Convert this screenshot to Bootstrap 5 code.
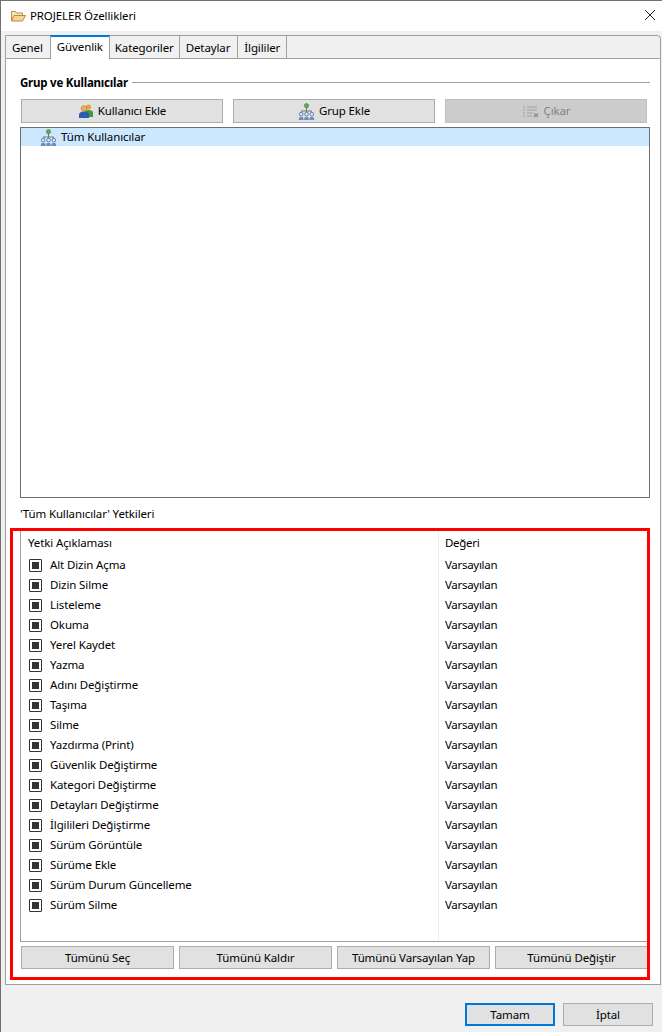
<!DOCTYPE html>
<html lang="tr">
<head>
    <meta charset="UTF-8">
    <meta name="viewport" content="width=device-width, initial-scale=1.0">
    <title>PROJELER Özellikleri</title>
    <link href="https://cdn.jsdelivr.net/npm/bootstrap@5.3.0/dist/css/bootstrap.min.css" rel="stylesheet">
    <style>
        html, body { height: 100%; }
        body { background: #f0f0f0; font-family: "Noto Sans", "Open Sans", sans-serif; font-size: 11.5px; letter-spacing: -.12px; line-height: 16px; color: #000; overflow: hidden; }
        .dlg { position: relative; height: 1032px; border-top: 1px solid #707070; border-left: 1px solid #707070; }
        .dlg-title { height: 30px; padding-left: 9px; gap: 4px; background: #fff; }
        .dlg-close { margin-left: auto; margin-right: 4px; margin-bottom: 2px; width: 16px; height: 16px; }
        .folder { margin: 0 1px 0 0; height: 100%; padding: 4px 0 0 4px; }
        .tabstrip { height: 24px; border: 1px solid #a0a0a0; border-radius: 0 4px 0 0; background: #f0f0f0; }
        .tabitem { padding: 0 6px; line-height: 23px; border-right: 1px solid #a0a0a0; color: #000; text-decoration: none; }
        .tabitem:first-child, .tabitem:nth-child(4) { padding: 0 7px 0 6px; }
        .tabitem:nth-child(3) { padding: 0 5px; }
        .tabitem.on { background: #fff; border-top: 2px solid #0078d7; line-height: 20px; height: 24px; margin-top: -1px; margin-bottom: -1px; border-left: 1px solid #a0a0a0; margin-left: -1px; }
        .tabpane { height: 926px; background: #fff; border: 1px solid #a0a0a0; border-top: 0; padding: 0 10px 0 14px; }
        .grp-head { padding-top: 8px; height: 40px; gap: 4px; font-weight: 700; letter-spacing: -.22px; }
        .grp-head hr { flex: 1; margin: 0 0 1px; border-top: 1px solid #a0a0a0; opacity: 1; }
        .swtbtn { height: 24px; border: 1px solid #adadad; border-radius: 0; background: #e1e1e1; color: #000; font-size: 11.5px; letter-spacing: -.12px; line-height: 16px; padding: 0; gap: 4px; }
        .swtbtn:disabled { background: #ccc; border-color: #bfbfbf; color: #838383; opacity: 1; }
        .btn-row { gap: 10px; padding: 0 3px 0 1px; }
        .btn-row .swtbtn { flex: 1 1 0; }
        .treebox { height: 371px; margin-top: 4px; border: 1px solid #6e6e6e; }
        .treesel { height: 18px; background: #cce8ff; padding-left: 19px; gap: 4px; }
        .perm-label { margin-top: 8px; height: 16px; }
        .permbox { margin-top: 7px; height: 413px; border-left: 1px solid #a0a0a0; border-bottom: 1px solid #a0a0a0; background: linear-gradient(#e8f0f8, #e8f0f8) no-repeat 417px 0 / 1px 100%; }
        .permhead { height: 26px; padding-top: 6px; }
        .colname { width: 417px; padding-left: 7px; }
        .colval { padding-left: 7px; flex: 1; letter-spacing: -.3px; }
        .permrow { height: 20px; line-height: 20px; }
        .permrow .colname { padding-left: 8px; gap: 8px; }
        .chk { width: 13px; height: 13px; border: 1.5px solid #333; border-radius: 1px; padding: 2px; }
        .chk::before { content: ""; display: block; width: 100%; height: 100%; background: #333; }
        .bulk { gap: 5px; margin-top: 4px; padding: 0 2px 0 1px; }
        .bulk .swtbtn { flex: 1 1 0; height: 23px; }
        .dlg-foot { gap: 8px; padding: 18px 8px 0 0; }
        .dlg-foot .swtbtn { width: 90px; height: 23px; }
        .dlg-foot .swtbtn.def { border: 2px solid #0078d7; }
        .redmark { position: absolute; left: 9px; top: 527px; width: 640px; height: 452px; border: 3px solid #f00; pointer-events: none; }
    </style>
</head>
<body>
<div class="dlg">
    <div class="dlg-title d-flex align-items-center">
        <svg width="16" height="16" viewBox="0 0 16 16">
            <path d="M1.500 13V3.500h4l1 1.500h6v2" fill="#f6e4bd" stroke="#b98a45"/>
            <path d="M1.500 13l2.500-5.500h11.500l-3 5.500z" fill="#f8d492" stroke="#b98a45" stroke-linejoin="round"/>
        </svg>
        <span>PROJELER Özellikleri</span>
        <svg class="dlg-close" viewBox="0 0 16 16"><path d="M3 3l10 10M13 3L3 13" stroke="#222" stroke-width="1" fill="none"/></svg>
    </div>
    <div class="folder">
        <div class="tabstrip d-flex">
            <a class="tabitem" href="#">Genel</a>
            <a class="tabitem on" href="#">Güvenlik</a>
            <a class="tabitem" href="#">Kategoriler</a>
            <a class="tabitem" href="#">Detaylar</a>
            <a class="tabitem" href="#">İlgililer</a>
        </div>
        <div class="tabpane">
            <div class="grp-head d-flex align-items-center"><span>Grup ve Kullanıcılar</span><hr></div>
            <div class="btn-row d-flex">
                <button class="btn swtbtn d-flex align-items-center justify-content-center" type="button">
                    <svg width="16" height="16" viewBox="0 0 16 16">
                        <circle cx="10.500" cy="4" r="2.600" fill="#e8a33a"/>
                        <path d="M7 14V9q0-2 3.500-2t4.500 2v5z" fill="#3f9a3f"/>
                        <circle cx="6" cy="5.500" r="2.800" fill="#f0b050" stroke="#a86a20" stroke-width=".5"/>
                        <path d="M1 15v-3q0-3.500 5-3.500t5 3.500v3z" fill="#2a5db0"/>
                    </svg>
                    <span>Kullanıcı Ekle</span>
                </button>
                <button class="btn swtbtn d-flex align-items-center justify-content-center" type="button">
                    <svg width="17" height="17" viewBox="0 0 16 16">
                        <use href="#grpicon"/>
                    </svg>
                    <span>Grup Ekle</span>
                </button>
                <button class="btn swtbtn d-flex align-items-center justify-content-center" type="button" disabled>
                    <svg width="18" height="16" viewBox="0 0 18 16">
                        <path d="M1 4h2M1 7h2M1 10h2M1 13h2M5 4h10M5 7h10M5 10h6M5 13h5" stroke="#aeaeae" stroke-width="1.500" fill="none"/>
                        <path d="M12 10.500l4 3.500M16 10.500l-4 3.500" stroke="#8f8f8f" stroke-width="1.500" fill="none"/>
                    </svg>
                    <span>Çıkar</span>
                </button>
            </div>
            <div class="treebox">
                <div class="treesel d-flex align-items-center">
                    <svg width="17" height="17" viewBox="0 0 16 16">
                        <g id="grpicon">
                            <path d="M8 4v4M3.500 10V7.500h9V10M8 7.500V10" stroke="#777" fill="none"/>
                            <circle cx="8" cy="2.500" r="2" fill="#5fae5f" stroke="#3a7d3a" stroke-width=".6"/>
                            <circle cx="3" cy="10.500" r="1.700" fill="#e6eef8" stroke="#4a6c9c" stroke-width=".8"/>
                            <circle cx="8" cy="10.500" r="1.700" fill="#e6eef8" stroke="#4a6c9c" stroke-width=".8"/>
                            <circle cx="13" cy="10.500" r="1.700" fill="#e6eef8" stroke="#4a6c9c" stroke-width=".8"/>
                            <path d="M.8 16v-1.500q0-1.500 2.200-1.500t2.200 1.500V16zM5.800 16v-1.500q0-1.500 2.200-1.500t2.200 1.500V16zM10.800 16v-1.500q0-1.500 2.200-1.500t2.200 1.500V16z" fill="#6a8fbe"/>
                        </g>
                    </svg>
                    <span>Tüm Kullanıcılar</span>
                </div>
            </div>
            <div class="perm-label">'Tüm Kullanıcılar' Yetkileri</div>
            <div class="permbox">
                <div class="permhead d-flex"><div class="colname">Yetki Açıklaması</div><div class="colval">Değeri</div></div>
                <div class="permrow d-flex"><div class="colname d-flex align-items-center"><span class="chk"></span>Alt Dizin Açma</div><div class="colval">Varsayılan</div></div>
                <div class="permrow d-flex"><div class="colname d-flex align-items-center"><span class="chk"></span>Dizin Silme</div><div class="colval">Varsayılan</div></div>
                <div class="permrow d-flex"><div class="colname d-flex align-items-center"><span class="chk"></span>Listeleme</div><div class="colval">Varsayılan</div></div>
                <div class="permrow d-flex"><div class="colname d-flex align-items-center"><span class="chk"></span>Okuma</div><div class="colval">Varsayılan</div></div>
                <div class="permrow d-flex"><div class="colname d-flex align-items-center"><span class="chk"></span>Yerel Kaydet</div><div class="colval">Varsayılan</div></div>
                <div class="permrow d-flex"><div class="colname d-flex align-items-center"><span class="chk"></span>Yazma</div><div class="colval">Varsayılan</div></div>
                <div class="permrow d-flex"><div class="colname d-flex align-items-center"><span class="chk"></span>Adını Değiştirme</div><div class="colval">Varsayılan</div></div>
                <div class="permrow d-flex"><div class="colname d-flex align-items-center"><span class="chk"></span>Taşıma</div><div class="colval">Varsayılan</div></div>
                <div class="permrow d-flex"><div class="colname d-flex align-items-center"><span class="chk"></span>Silme</div><div class="colval">Varsayılan</div></div>
                <div class="permrow d-flex"><div class="colname d-flex align-items-center"><span class="chk"></span>Yazdırma (Print)</div><div class="colval">Varsayılan</div></div>
                <div class="permrow d-flex"><div class="colname d-flex align-items-center"><span class="chk"></span>Güvenlik Değiştirme</div><div class="colval">Varsayılan</div></div>
                <div class="permrow d-flex"><div class="colname d-flex align-items-center"><span class="chk"></span>Kategori Değiştirme</div><div class="colval">Varsayılan</div></div>
                <div class="permrow d-flex"><div class="colname d-flex align-items-center"><span class="chk"></span>Detayları Değiştirme</div><div class="colval">Varsayılan</div></div>
                <div class="permrow d-flex"><div class="colname d-flex align-items-center"><span class="chk"></span>İlgilileri Değiştirme</div><div class="colval">Varsayılan</div></div>
                <div class="permrow d-flex"><div class="colname d-flex align-items-center"><span class="chk"></span>Sürüm Görüntüle</div><div class="colval">Varsayılan</div></div>
                <div class="permrow d-flex"><div class="colname d-flex align-items-center"><span class="chk"></span>Sürüme Ekle</div><div class="colval">Varsayılan</div></div>
                <div class="permrow d-flex"><div class="colname d-flex align-items-center"><span class="chk"></span>Sürüm Durum Güncelleme</div><div class="colval">Varsayılan</div></div>
                <div class="permrow d-flex"><div class="colname d-flex align-items-center"><span class="chk"></span>Sürüm Silme</div><div class="colval">Varsayılan</div></div>
            </div>
            <div class="bulk d-flex">
                <button class="btn swtbtn" type="button">Tümünü Seç</button>
                <button class="btn swtbtn" type="button">Tümünü Kaldır</button>
                <button class="btn swtbtn" type="button">Tümünü Varsayılan Yap</button>
                <button class="btn swtbtn" type="button">Tümünü Değiştir</button>
            </div>
        </div>
        <div class="dlg-foot d-flex justify-content-end">
            <button class="btn swtbtn def" type="button">Tamam</button>
            <button class="btn swtbtn" type="button">İptal</button>
        </div>
    </div>
    <div class="redmark"></div>
</div>
<script src="https://cdn.jsdelivr.net/npm/bootstrap@5.3.0/dist/js/bootstrap.bundle.min.js"></script>
</body>
</html>
